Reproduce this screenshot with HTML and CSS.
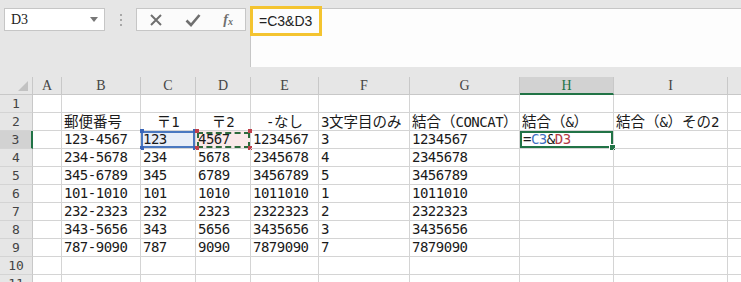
FILE: index.html
```html
<!DOCTYPE html>
<html>
<head>
<meta charset="utf-8">
<link rel="stylesheet" href="styles.css">
</head>
<body>
<div class="app">
  <div class="toolbar">
    <div class="namebox"><span class="nb-text">D3</span><span class="nb-arrow"></span></div>
    <div class="dots"><i></i><i></i><i></i></div>
    <div class="fnbox">
      <svg class="ic" width="14" height="14" viewBox="0 0 14 14"><path d="M2 2 L12 12 M12 2 L2 12" stroke="#6f6f6f" stroke-width="2" fill="none"/></svg>
      <svg class="ic" width="16" height="14" viewBox="0 0 16 14"><path d="M1.5 7.5 L6 12 L14.5 2" stroke="#6f6f6f" stroke-width="2.6" fill="none"/></svg>
      <span class="fx">f<sub>x</sub></span>
    </div>
    <div class="formula"><span class="fhl">=C3&amp;D3</span></div>
  </div>
  <div class="sheet">
    <div class="ch corner"><span class="tri"></span></div>
    <div class="ch">A</div><div class="ch">B</div><div class="ch">C</div><div class="ch">D</div><div class="ch">E</div><div class="ch">F</div><div class="ch">G</div><div class="ch sel">H</div><div class="ch">I</div><div class="ch last"></div>

    <div class="rh">1</div><div class="c"></div><div class="c"></div><div class="c"></div><div class="c"></div><div class="c"></div><div class="c"></div><div class="c"></div><div class="c"></div><div class="c"></div><div class="c last"></div>

    <div class="rh">2</div><div class="c"></div><div class="c"><span class="j">郵便番号</span></div><div class="c ctr"><span class="j">〒</span>1</div><div class="c ctr"><span class="j">〒</span>2</div><div class="c ctr">-<span class="j">なし</span></div><div class="c">3<span class="j">文字目のみ</span></div><div class="c"><span class="j">結合（</span>CONCAT<span class="j">）</span></div><div class="c"><span class="j">結合（</span>&amp;<span class="j">）</span></div><div class="c"><span class="j">結合（</span>&amp;<span class="j">）その</span>2</div><div class="c last"></div>

    <div class="rh sel">3</div><div class="c"></div><div class="c">123-4567</div><div class="c refc">123<span class="sq tl"></span><span class="sq bl"></span><span class="sq tr"></span><span class="sq br"></span></div><div class="c refd">4567<span class="sq tl"></span><span class="sq bl"></span><span class="sq tr"></span><span class="sq br"></span></div><div class="c">1234567</div><div class="c">3</div><div class="c">1234567</div><div class="c active">=<span class="rb">C3</span>&amp;<span class="rr">D3</span><span class="handle"></span></div><div class="c"></div><div class="c last"></div>

    <div class="rh">4</div><div class="c"></div><div class="c">234-5678</div><div class="c">234</div><div class="c">5678</div><div class="c">2345678</div><div class="c">4</div><div class="c">2345678</div><div class="c"></div><div class="c"></div><div class="c last"></div>

    <div class="rh">5</div><div class="c"></div><div class="c">345-6789</div><div class="c">345</div><div class="c">6789</div><div class="c">3456789</div><div class="c">5</div><div class="c">3456789</div><div class="c"></div><div class="c"></div><div class="c last"></div>

    <div class="rh">6</div><div class="c"></div><div class="c">101-1010</div><div class="c">101</div><div class="c">1010</div><div class="c">1011010</div><div class="c">1</div><div class="c">1011010</div><div class="c"></div><div class="c"></div><div class="c last"></div>

    <div class="rh">7</div><div class="c"></div><div class="c">232-2323</div><div class="c">232</div><div class="c">2323</div><div class="c">2322323</div><div class="c">2</div><div class="c">2322323</div><div class="c"></div><div class="c"></div><div class="c last"></div>

    <div class="rh">8</div><div class="c"></div><div class="c">343-5656</div><div class="c">343</div><div class="c">5656</div><div class="c">3435656</div><div class="c">3</div><div class="c">3435656</div><div class="c"></div><div class="c"></div><div class="c last"></div>

    <div class="rh">9</div><div class="c"></div><div class="c">787-9090</div><div class="c">787</div><div class="c">9090</div><div class="c">7879090</div><div class="c">7</div><div class="c">7879090</div><div class="c"></div><div class="c"></div><div class="c last"></div>

    <div class="rh">10</div><div class="c"></div><div class="c"></div><div class="c"></div><div class="c"></div><div class="c"></div><div class="c"></div><div class="c"></div><div class="c"></div><div class="c"></div><div class="c last"></div>

    <div class="rh">11</div><div class="c"></div><div class="c"></div><div class="c"></div><div class="c"></div><div class="c"></div><div class="c"></div><div class="c"></div><div class="c"></div><div class="c"></div><div class="c last"></div>
  </div>
</div>
</body>
</html>
```
FILE: styles.css
```css
html, body {
  margin: 0;
  padding: 0;
  background: #ffffff;
  overflow: hidden;
}
.app {
  width: 741px;
  height: 282px;
  overflow: hidden;
  font-family: "DejaVu Sans Mono", "Noto Sans CJK JP", monospace;
}
.toolbar {
  height: 77px;
  background: #e6e6e6;
  display: flex;
  align-items: flex-start;
  padding-top: 8px;
  box-sizing: border-box;
  position: relative;
}
.namebox {
  margin-left: 4px;
  width: 101px;
  height: 23px;
  box-sizing: border-box;
  background: #fff;
  border: 1px solid #c6c6c6;
  display: flex;
  align-items: center;
  justify-content: space-between;
  padding: 0 6px 0 6px;
  font-family: "Liberation Serif", serif;
  font-size: 14px;
  color: #222;
}
.nb-arrow {
  width: 0; height: 0;
  border-left: 4px solid transparent;
  border-right: 4px solid transparent;
  border-top: 5px solid #777;
}
.dots {
  width: 31px;
  height: 23px;
  display: flex;
  flex-direction: column;
  align-items: center;
  justify-content: center;
  gap: 3px;
}
.dots i {
  width: 2px; height: 2px;
  background: #a8a8a8;
  display: block;
}
.fnbox {
  width: 110px;
  height: 23px;
  box-sizing: border-box;
  background: #fbfbfb;
  border: 1px solid #c6c6c6;
  display: flex;
  align-items: center;
  justify-content: space-between;
  padding: 0 12px 0 12px;
}
.fx {
  font-family: "Liberation Serif", serif;
  font-style: italic;
  font-weight: bold;
  font-size: 14px;
  color: #6f6f6f;
  line-height: 1;
}
.fx sub { font-size: 10px; vertical-align: -1px; }
.formula {
  margin-left: 4px;
  flex: 1;
  height: 59px;
  background: #fdfdfd;
  border-top: 1px solid #c6c6c6;
  border-left: 1px solid #c6c6c6;
  box-sizing: border-box;
  position: relative;
}
.fhl {
  position: absolute;
  left: -1px;
  top: -3px;
  width: 72px;
  height: 30px;
  box-sizing: border-box;
  border: 3px solid #f4c430;
  padding-left: 6px;
  font-family: "Liberation Sans", sans-serif;
  font-size: 14px;
  line-height: 24px;
  color: #222;
}
.sheet {
  display: grid;
  grid-template-columns: 33px 29px 79px 55px 55px 68px 91px 110px 94px 114px 1fr;
  grid-template-rows: 18px repeat(11, 18px);
  font-size: 14px;
  letter-spacing: -0.5px;
  color: #1a1a1a;
}
.ch {
  background: #e6e6e6;
  border-right: 1px solid #c8c8c8;
  border-bottom: 1px solid #c8c8c8;
  box-sizing: border-box;
  text-align: center;
  color: #444;
  font-family: "Liberation Serif", serif;
  font-size: 14px;
  letter-spacing: 0;
  line-height: 17px;
}
.ch.sel {
  background: #d2d2d2;
  border-bottom: 2px solid #217346;
  color: #217346;
}
.ch.last { border-right: none; }
.corner { position: relative; }
.tri {
  position: absolute;
  right: 4px;
  bottom: 3px;
  width: 0; height: 0;
  border-left: 10px solid transparent;
  border-bottom: 10px solid #c2c2c2;
}
.rh {
  background: #e6e6e6;
  border-right: 1px solid #c8c8c8;
  border-bottom: 1px solid #d4d4d4;
  box-sizing: border-box;
  text-align: center;
  color: #444;
  font-size: 13px;
  letter-spacing: 0;
  line-height: 17px;
}
.rh.sel {
  background: #d2d2d2;
  border-right: 2px solid #217346;
}
.c {
  border-right: 1px solid #d4d4d4;
  border-bottom: 1px solid #d4d4d4;
  box-sizing: border-box;
  padding-left: 2px;
  line-height: 17px;
  white-space: nowrap;
  position: relative;
}
.j {
  font-family: "Noto Sans CJK JP", sans-serif;
  font-size: 14.5px;
  letter-spacing: 0;
  line-height: 16px;
}
.c.last { border-right: none; }
.c.ctr { text-align: center; padding-left: 0; }
.refc {
  background: #e8eef8;
  box-shadow: inset 0 0 0 2px #4a78c0;
}
.refd {
  background: #fae9e9;
  outline: 2px dashed #2d6a3c;
  outline-offset: -3px;
}
.sq {
  position: absolute;
  width: 4px; height: 4px;
}
.refc .sq { background: #3a65b8; }
.refd .sq { background: #c0404a; }
.sq.tl { left: -1px; top: -2px; }
.sq.bl { left: -1px; bottom: -2px; }
.sq.tr { right: -2px; top: -2px; }
.sq.br { right: -2px; bottom: -2px; }
.active {
  box-shadow: inset 0 0 0 2px #217346;
  padding-left: 3px;
}
.rb { color: #3f6fc2; }
.rr { color: #b43a45; }
.handle {
  position: absolute;
  right: -3px;
  bottom: -3px;
  width: 5px; height: 5px;
  background: #217346;
  border: 1px solid #fff;
}
```
